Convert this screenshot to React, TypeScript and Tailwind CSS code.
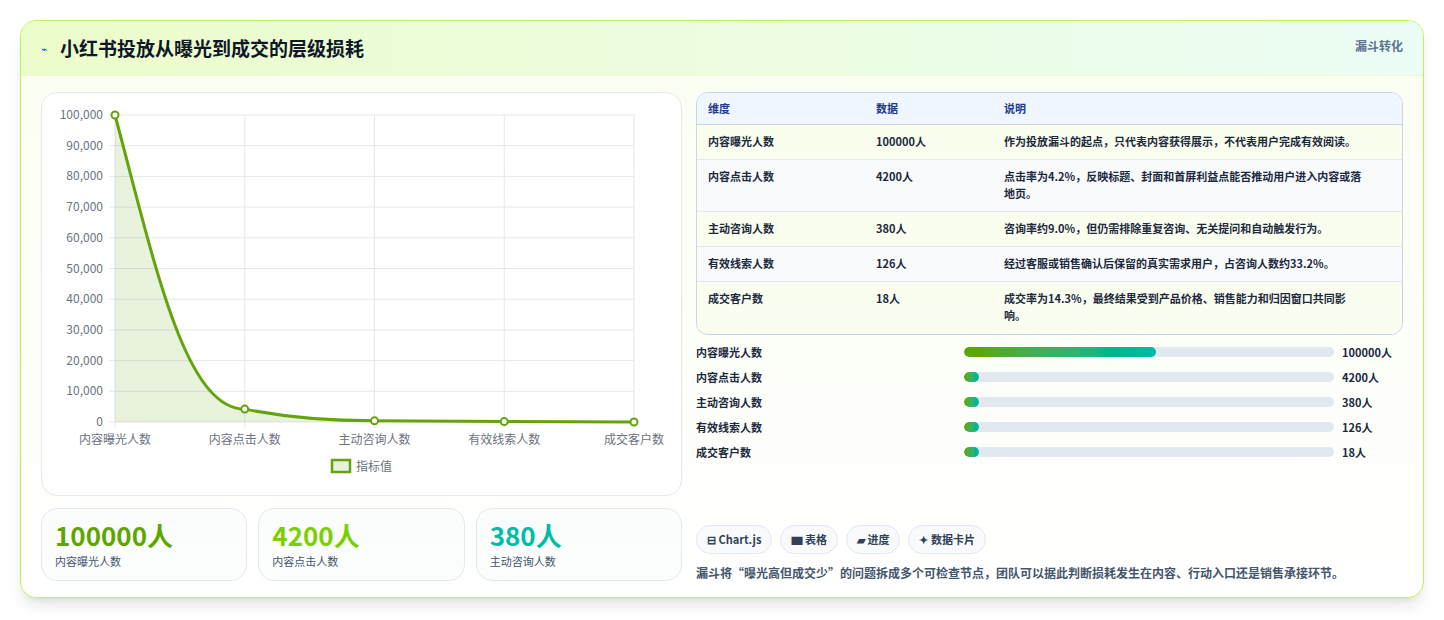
const font = { fontFamily: '"Noto Sans CJK SC", "Liberation Sans", sans-serif' };

const rows = [
  ["内容曝光人数", "100000人", "作为投放漏斗的起点，只代表内容获得展示，不代表用户完成有效阅读。"],
  ["内容点击人数", "4200人", "点击率为4.2%，反映标题、封面和首屏利益点能否推动用户进入内容或落地页。"],
  ["主动咨询人数", "380人", "咨询率约9.0%，但仍需排除重复咨询、无关提问和自动触发行为。"],
  ["有效线索人数", "126人", "经过客服或销售确认后保留的真实需求用户，占咨询人数约33.2%。"],
  ["成交客户数", "18人", "成交率为14.3%，最终结果受到产品价格、销售能力和归因窗口共同影响。"],
];

const bars = [
  ["内容曝光人数", "100000人", 52],
  ["内容点击人数", "4200人", 4],
  ["主动咨询人数", "380人", 4],
  ["有效线索人数", "126人", 4],
  ["成交客户数", "18人", 4],
] as const;

function Chart() {
  const x0 = 73, x1 = 592, y0 = 22, y1 = 329;
  const ys = [100000, 90000, 80000, 70000, 60000, 50000, 40000, 30000, 20000, 10000, 0];
  const labels = ["内容曝光人数", "内容点击人数", "主动咨询人数", "有效线索人数", "成交客户数"];
  const xs = labels.map((_, i) => x0 + (i * (x1 - x0)) / 4);
  const vals = [100000, 4200, 380, 126, 18];
  const py = vals.map((v) => y1 - (v / 100000) * (y1 - y0));
  const line = `M${xs[0]},${py[0]} C${xs[0] + 40},${py[0] + 150} ${xs[1] - 60},${py[1]} ${xs[1]},${py[1]} C${xs[1] + 40},${py[1] + 8} ${xs[2] - 40},${py[2]} ${xs[2]},${py[2]} L${xs[3]},${py[3]} L${xs[4]},${py[4]}`;
  return (
    <svg width="640" height="403" className="block">
      {ys.map((v, i) => {
        const y = y0 + (i * (y1 - y0)) / 10;
        return (
          <g key={v}>
            <line x1={x0 - 6} x2={x1} y1={y} y2={y} stroke="#e5e7eb" />
            <text x={x0 - 12} y={y + 4} textAnchor="end" fontSize="12" fill="#6b7280" style={font}>
              {v.toLocaleString("en-US")}
            </text>
          </g>
        );
      })}
      {xs.map((x, i) => (
        <g key={i}>
          <line x1={x} x2={x} y1={y0} y2={y1 + 6} stroke="#e5e7eb" />
          <text x={x} y={y1 + 22} textAnchor="middle" fontSize="12" fill="#6b7280" style={font}>
            {labels[i]}
          </text>
        </g>
      ))}
      <path d={`${line} L${x1},${y1} L${x0},${y1} Z`} fill="#65a30d" fillOpacity="0.14" />
      <path d={line} fill="none" stroke="#65a30d" strokeWidth="3" />
      {xs.map((x, i) => (
        <circle key={i} cx={x} cy={py[i]} r="3.5" fill="#fff" stroke="#65a30d" strokeWidth="2" />
      ))}
      <rect x="290" y="367" width="18" height="12" fill="#65a30d" fillOpacity="0.15" stroke="#65a30d" strokeWidth="2.5" />
      <text x="314" y="378" fontSize="12" fill="#6b7280" style={font}>指标值</text>
    </svg>
  );
}

export default function App() {
  return (
    <div className="min-h-[620px] bg-white p-5" style={font}>
      <div className="rounded-2xl border border-lime-300 bg-gradient-to-b from-lime-50/60 to-white shadow-lg overflow-hidden">
        <div className="h-[55px] flex items-start justify-between px-5 bg-gradient-to-r from-lime-100 to-emerald-50 border-b border-lime-100">
          <div className="flex items-center gap-3 h-[55px]">
            <span className="text-[11px] text-blue-700">⌁</span>
            <h1 className="text-[19px] font-bold text-gray-900">小红书投放从曝光到成交的层级损耗</h1>
          </div>
          <span className="text-xs font-bold text-slate-500 mt-[17px]">漏斗转化</span>
        </div>
        <div className="flex gap-[14px] px-5 pt-[16px] pb-[16px]">
          <div className="w-[641px] flex flex-col gap-3">
            <div className="rounded-2xl border border-gray-200 bg-white h-[404px]">
              <Chart />
            </div>
            <div className="grid grid-cols-3 gap-[11px]">
              {[
                ["100000人", "text-lime-600"],
                ["4200人", "text-lime-500"],
                ["380人", "text-teal-500"],
              ].map(([v, c], i) => (
                <div key={v} className="rounded-2xl border border-slate-200 bg-slate-50/40 h-[73px] px-[13px] pt-2">
                  <div className={`text-[26px] font-bold leading-9 ${c}`}>{v}</div>
                  <div className="text-[11px] text-slate-600">{["内容曝光人数", "内容点击人数", "主动咨询人数"][i]}</div>
                </div>
              ))}
            </div>
          </div>
          <div className="flex-1 flex flex-col">
            <div className="rounded-xl border border-slate-300 overflow-hidden">
              <div className="grid grid-cols-[168px_128px_1fr] bg-blue-50 h-[32px] items-center px-[11px] text-[11px] font-bold text-blue-900 border-b border-slate-300">
                <span>维度</span><span>数据</span><span>说明</span>
              </div>
              {rows.map((r, i) => (
                <div
                  key={r[0]}
                  className={`grid grid-cols-[168px_128px_1fr] px-[11px] py-[8px] text-[11px] font-semibold text-slate-800 leading-[17px] border-b border-slate-200 last:border-b-0 ${i % 2 ? "bg-slate-50" : "bg-lime-50/50"} ${i === 1 || i === 4 ? "min-h-[52px]" : "min-h-[35px]"}`}
                >
                  <span>{r[0]}</span><span>{r[1]}</span><span className="pr-7">{r[2]}</span>
                </div>
              ))}
            </div>
            <div className="flex flex-col gap-[9px] mt-[9px]">
              {bars.map(([l, v, w]) => (
                <div key={l} className="flex items-center h-4 text-[11px] font-semibold text-slate-800">
                  <span className="w-[268px]">{l}</span>
                  <div className="w-[370px] h-[10px] rounded-full bg-slate-200 overflow-hidden">
                    <div className="h-full rounded-full bg-gradient-to-r from-lime-600 to-teal-500" style={{ width: `${w}%` }} />
                  </div>
                  <span className="ml-2 font-bold">{v}</span>
                </div>
              ))}
            </div>
            <div className="mt-auto flex gap-2 text-[11px] font-bold text-slate-700">
              {["⊟ Chart.js", "▆ 表格", "▰ 进度", "✦ 数据卡片"].map((t) => (
                <span key={t} className="rounded-full border border-slate-200 bg-slate-50 px-[10px] h-[29px] flex items-center">{t}</span>
              ))}
            </div>
            <p className="mt-[11px] text-xs font-semibold text-slate-600">
              漏斗将“曝光高但成交少”的问题拆成多个可检查节点，团队可以据此判断损耗发生在内容、行动入口还是销售承接环节。
            </p>
          </div>
        </div>
      </div>
    </div>
  );
}
